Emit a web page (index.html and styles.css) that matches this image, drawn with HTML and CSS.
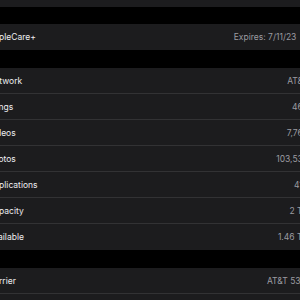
FILE: index.html
```html
<!DOCTYPE html>
<html lang="en">
<head>
    <meta charset="UTF-8">
    <meta name="viewport" content="width=device-width, initial-scale=1.0">
    <title>About</title>
    <link rel="stylesheet" href="styles.css">
</head>
<body>

    <!-- Final del grupo anterior -->
    <div class="group group-top"></div>

    <!-- AppleCare -->
    <div class="group">
        <div class="row">
            <span class="label">AppleCare+</span>
            <span class="value">Expires: 7/11/23<span class="chevron">&#8250;</span></span>
        </div>
    </div>

    <!-- Info del dispositivo -->
    <div class="group">
        <div class="row"><span class="label">Network</span><span class="value">AT&amp;T</span></div>
        <div class="row"><span class="label">Songs</span><span class="value">465</span></div>
        <div class="row"><span class="label">Videos</span><span class="value">7,768</span></div>
        <div class="row"><span class="label">Photos</span><span class="value">103,532</span></div>
        <div class="row"><span class="label">Applications</span><span class="value">412</span></div>
        <div class="row"><span class="label">Capacity</span><span class="value">2 TB</span></div>
        <div class="row"><span class="label">Available</span><span class="value">1.46 TB</span></div>
    </div>

    <!-- Operador -->
    <div class="group">
        <div class="row"><span class="label">Carrier</span><span class="value">AT&amp;T 53.0</span></div>
        <div class="row"><span class="label">Model Name</span><span class="value">iPhone</span></div>
    </div>

</body>
</html>
```

FILE: styles.css
```css
body {
    font-family: Inter, "Liberation Sans", sans-serif;
    background-color: #000;
    margin: 0;
    padding: 0;
    width: 300px;
    height: 300px;
    overflow: hidden;
    color: #e5e5ea;
    font-size: 8.5px;
}

.group {
    background-color: #1c1c1e;
    margin: 0 -12px 18px -30px;
    padding-left: 18px;
}

.group-top {
    height: 7px;
    margin-bottom: 17px;
}

.row {
    height: 26px;
    display: flex;
    align-items: center;
    justify-content: space-between;
    padding-right: 4px;
    border-bottom: 1px solid #323234;
    box-sizing: border-box;
}

.group .row:last-child {
    border-bottom: none;
}

.label {
    color: #ededf0;
}

.value {
    color: #9b9ba1;
    display: flex;
    align-items: center;
}

.chevron {
    margin-left: 7px;
    font-size: 12px;
    color: #5a5a5f;
}
```
